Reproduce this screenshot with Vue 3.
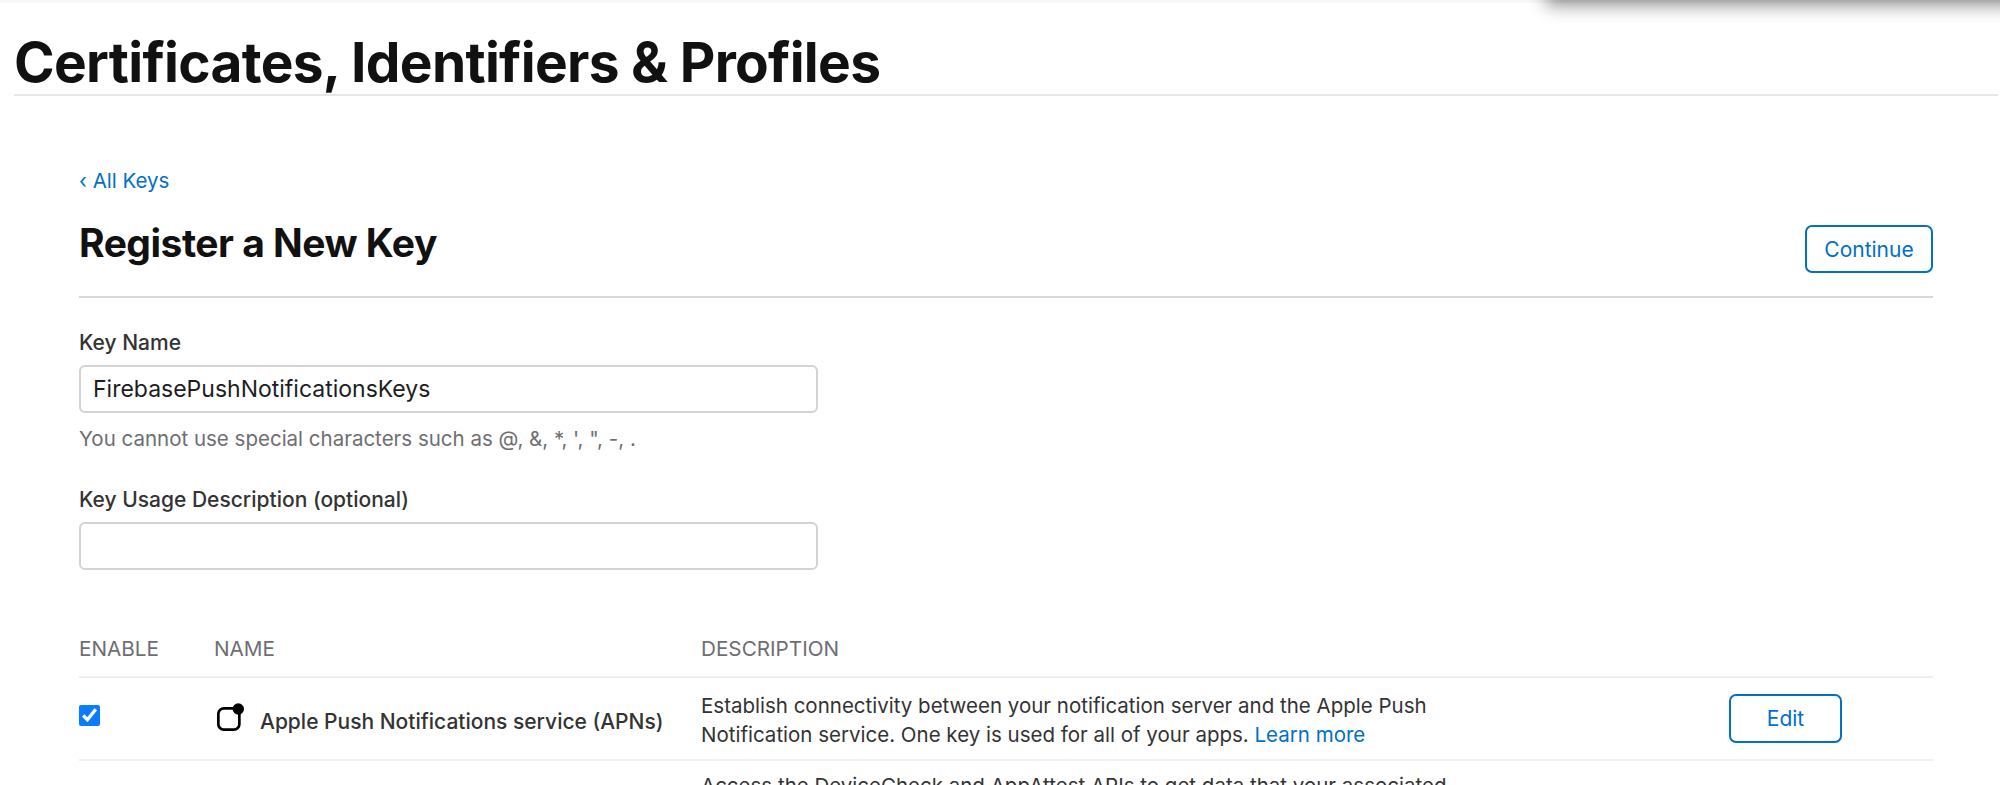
<template>
  <div class="page">
    <div class="top-strip"></div>
    <div class="account-shadow"></div>
    <h1 class="page-title">Certificates, Identifiers &amp; Profiles</h1>

    <main class="content">
      <a class="back-link" href="#">‹ All Keys</a>
      <div class="head-row">
        <h2>Register a New Key</h2>
        <button class="btn btn-continue" type="button">Continue</button>
      </div>

      <div class="field">
        <label for="key-name">Key Name</label>
        <input id="key-name" v-model="keyName" type="text" />
        <p class="hint">You cannot use special characters such as @, &amp;, *, ', ", -, .</p>
      </div>

      <div class="field field-desc">
        <label for="key-desc">Key Usage Description (optional)</label>
        <input id="key-desc" v-model="keyDesc" type="text" />
      </div>

      <div class="table">
        <div class="row row-head">
          <div class="col-enable">ENABLE</div>
          <div class="col-name">NAME</div>
          <div class="col-desc">DESCRIPTION</div>
        </div>
        <div class="row row-item">
          <div class="col-enable"><input v-model="apnsOn" class="check" type="checkbox" /></div>
          <div class="col-name service">
            <svg class="service-icon" viewBox="0 0 28 29" width="28" height="29">
              <rect x="1.35" y="5.35" width="21" height="21.3" rx="5.5" fill="none" stroke="#000" stroke-width="2.7" />
              <circle cx="21.3" cy="6" r="5.7" fill="#000" />
            </svg>
            <span>Apple Push Notifications service (APNs)</span>
          </div>
          <div class="col-desc text">
            Establish connectivity between your notification server and the Apple Push
            Notification service. One key is used for all of your apps.
            <a href="#">Learn more</a>
          </div>
          <button class="btn btn-edit" type="button">Edit</button>
        </div>
        <div class="row row-next">
          <div class="col-enable"></div>
          <div class="col-name"></div>
          <div class="col-desc text">
            Access the DeviceCheck and AppAttest APIs to get data that your associated
          </div>
        </div>
      </div>
    </main>
  </div>
</template>

<script setup>
import { ref } from 'vue'

const keyName = ref('FirebasePushNotificationsKeys')
const keyDesc = ref('')
const apnsOn = ref(true)
</script>

<style scoped>
.page {
  position: relative;
  height: 785px;
  overflow: hidden;
  background: #fff;
  color: #1d1d1f;
  font-family: Inter, "Liberation Sans", sans-serif;
}

.top-strip {
  height: 3px;
  background: #f8f8f8;
}

.account-shadow {
  position: absolute;
  top: -30px;
  left: 1546px;
  right: -30px;
  height: 30px;
  background: #fff;
  box-shadow: 0 5px 18px rgba(0, 0, 0, 0.45);
}

.page-title {
  margin: 0 2px 0 14px;
  height: 93px;
  box-sizing: border-box;
  padding-top: 29px;
  border-bottom: 2px solid #e6e6e6;
  font-size: 55px;
  line-height: 60px;
  font-weight: 700;
  letter-spacing: -0.7px;
  color: #111;
}

.content {
  padding: 72px 67px 0 79px;
}

.back-link {
  display: block;
  font-size: 20.5px;
  line-height: 26px;
  color: #0070c9;
  text-decoration: none;
}

.head-row {
  display: flex;
  justify-content: space-between;
  align-items: flex-start;
  height: 77px;
  margin-top: 25px;
  border-bottom: 2px solid #d8d8d8;
}

.head-row h2 {
  margin: 0;
  font-size: 39px;
  line-height: 48px;
  font-weight: 700;
  letter-spacing: -0.5px;
  color: #111;
}

.btn {
  box-sizing: border-box;
  background: #fff;
  border: 2px solid #0070c9;
  border-radius: 7px;
  color: #0070c9;
  font-family: inherit;
  font-size: 21px;
  padding: 0;
}

.btn-continue {
  width: 128px;
  height: 48px;
  margin-top: 6px;
}

.btn-edit {
  width: 113px;
  height: 49px;
  margin-left: auto;
  margin-right: 91px;
  margin-top: 16px;
}

.field {
  display: flex;
  flex-direction: column;
  margin-top: 32px;
}

.field-desc {
  margin-top: 35px;
}

.field label {
  font-size: 21px;
  line-height: 26px;
  font-weight: 450;
  color: #333;
}

.field input {
  box-sizing: border-box;
  width: 739px;
  height: 48px;
  margin-top: 9px;
  padding: 0 12px;
  border: 2px solid #d2d2d7;
  border-radius: 6px;
  background: #fff;
  color: #1d1d1f;
  font-family: inherit;
  font-size: 23px;
  outline: none;
}

.hint {
  margin: 13px 0 0;
  font-size: 20.5px;
  line-height: 26px;
  color: #6e6e73;
}

.table {
  margin-top: 66px;
}

.row {
  display: flex;
  align-items: flex-start;
}

.row-head {
  height: 40px;
  border-bottom: 2px solid #f0f0f0;
  font-size: 20.7px;
  line-height: 26px;
  color: #6e6e73;
}

.row-item {
  height: 81px;
  border-bottom: 2px solid #f0f0f0;
}

.col-enable {
  width: 135px;
  flex: none;
}

.col-name {
  width: 487px;
  flex: none;
}

.col-desc {
  flex: none;
}

.text {
  width: 760px;
  margin-top: 13px;
  font-size: 20.5px;
  line-height: 29px;
  color: #333;
}

.text a {
  color: #0070c9;
  text-decoration: none;
}

.check {
  display: block;
  width: 21px;
  height: 21px;
  margin: 27px 0 0;
  accent-color: #0a7cff;
}

.service {
  display: flex;
  align-items: flex-start;
  margin-top: 25px;
  margin-left: 3px;
  width: 484px;
  font-size: 21px;
  line-height: 26px;
  font-weight: 450;
  color: #333;
}

.service-icon {
  flex: none;
  margin-right: 15px;
}

.service span {
  margin-top: 6px;
}

.row-next .text {
  margin-top: 10px;
}
</style>
